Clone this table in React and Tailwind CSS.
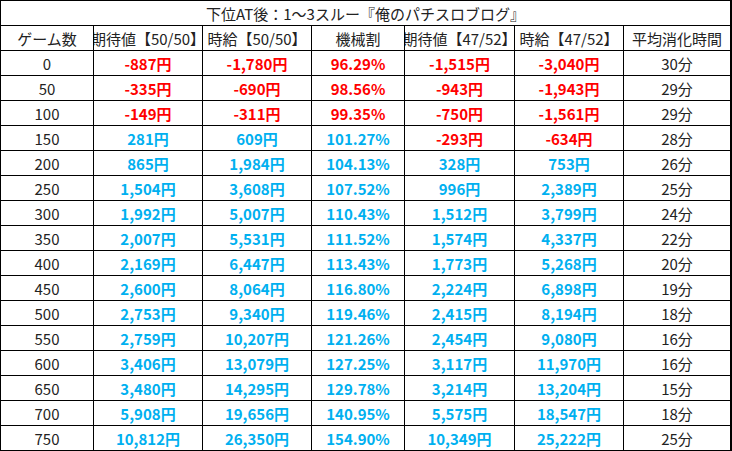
const rows = [
  ['0', '-887円', '-1,780円', '96.29%', '-1,515円', '-3,040円', '30分'],
  ['50', '-335円', '-690円', '98.56%', '-943円', '-1,943円', '29分'],
  ['100', '-149円', '-311円', '99.35%', '-750円', '-1,561円', '29分'],
  ['150', '281円', '609円', '101.27%', '-293円', '-634円', '28分'],
  ['200', '865円', '1,984円', '104.13%', '328円', '753円', '26分'],
  ['250', '1,504円', '3,608円', '107.52%', '996円', '2,389円', '25分'],
  ['300', '1,992円', '5,007円', '110.43%', '1,512円', '3,799円', '24分'],
  ['350', '2,007円', '5,531円', '111.52%', '1,574円', '4,337円', '22分'],
  ['400', '2,169円', '6,447円', '113.43%', '1,773円', '5,268円', '20分'],
  ['450', '2,600円', '8,064円', '116.80%', '2,224円', '6,898円', '19分'],
  ['500', '2,753円', '9,340円', '119.46%', '2,415円', '8,194円', '18分'],
  ['550', '2,759円', '10,207円', '121.26%', '2,454円', '9,080円', '16分'],
  ['600', '3,406円', '13,079円', '127.25%', '3,117円', '11,970円', '16分'],
  ['650', '3,480円', '14,295円', '129.78%', '3,214円', '13,204円', '15分'],
  ['700', '5,908円', '19,656円', '140.95%', '5,575円', '18,547円', '18分'],
  ['750', '10,812円', '26,350円', '154.90%', '10,349円', '25,222円', '25分'],
];

const headers = ['ゲーム数', '期待値【50/50】', '時給【50/50】', '機械割', '期待値【47/52】', '時給【47/52】', '平均消化時間'];

const cell = 'flex items-center justify-center overflow-hidden whitespace-nowrap border-r border-b border-black h-[25px]';

function colorFor(v, i) {
  if (i === 0 || i === 6) return 'text-[#222] font-normal';
  const neg = v.startsWith('-') || (i === 3 && parseFloat(v) < 100);
  return neg ? 'text-[#ff0000] font-bold' : 'text-[#00b0f0] font-bold';
}

export default function App() {
  return (
    <div className="w-[732px] bg-white text-[15px] leading-none" style={{ fontFamily: '"Noto Sans CJK JP", "Noto Sans", sans-serif' }}>
      <div className="grid grid-cols-[93px_109px_109px_93px_110px_109px_107px] border-l border-t border-r border-b border-black w-[732px]">
        <div className={`${cell} col-span-7 text-[#222]`}>下位AT後：1〜3スルー『俺のパチスロブログ』</div>
        {headers.map((h) => (
          <div key={h} className={`${cell} text-[#222]`}>{h}</div>
        ))}
        {rows.map((r) =>
          r.map((v, i) => (
            <div key={r[0] + '-' + i} className={`${cell} ${colorFor(v, i)}`}>{v}</div>
          ))
        )}
      </div>
    </div>
  );
}
